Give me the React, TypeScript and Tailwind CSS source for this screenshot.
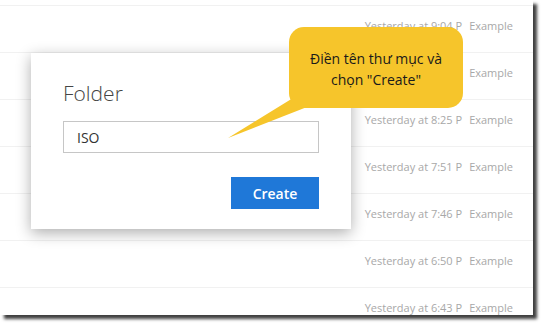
import React from "react";

const rows = [
  "Yesterday at 9:04 P",
  "Yesterday at 8:25 P",
  "Yesterday at 8:25 P",
  "Yesterday at 7:51 P",
  "Yesterday at 7:46 P",
  "Yesterday at 6:50 P",
  "Yesterday at 6:43 P",
];

const App: React.FC = () => {
  return (
    <div
      className="w-[543px] h-[325px] bg-white"
      style={{ fontFamily: '"Open Sans", "Noto Sans", sans-serif' }}
    >
      <div className="relative w-[533px] h-[315px] bg-white overflow-hidden shadow-[4px_4px_3px_rgba(0,0,0,0.75)]">
        {/* file list behind the dialog */}
        <div className="h-[5px]" />
        {rows.map((time, i) => (
          <div
            key={i}
            className="h-[47px] border-t border-[#f1f1f1] flex items-center justify-end pr-[20px] pb-[5px] text-[11px] text-[#a8a8a8] whitespace-nowrap"
          >
            <span>{time}</span>
            <span className="ml-[7px]">Example</span>
          </div>
        ))}

        {/* dialog */}
        <div className="absolute left-[31px] top-[53px] w-[320px] h-[176px] bg-white shadow-[0_4px_14px_rgba(0,0,0,0.32)] px-[32px] pt-[24px] flex flex-col">
          <div className="h-[32px] leading-[32px] text-[21px] font-light text-[#454545]">Folder</div>
          <div className="mt-[12px] h-[32px] border border-[#c6c6c6] flex items-center px-[13px] text-[14px] text-[#333333]">
            ISO
          </div>
          <div className="mt-[24px] flex justify-end">
            <button className="w-[88px] h-[32px] bg-[#1f78d8] text-white text-[14px] font-semibold">
              Create
            </button>
          </div>
        </div>

        {/* callout */}
        <div className="absolute left-[289px] top-[27px] w-[174px] h-[81px] rounded-[15px] bg-[#f6c52b] flex items-center justify-center pt-[2px]">
          <p className="text-center text-[14px] leading-[21px] text-[#1a1a1a]">
            Điền tên thư mục và
            <br />
            chọn "Create"
          </p>
        </div>
        <svg className="absolute left-0 top-0" width="533" height="315">
          <polygon points="228,138 293,98 330,98" fill="#f6c52b" />
        </svg>
      </div>
    </div>
  );
};

export default App;
